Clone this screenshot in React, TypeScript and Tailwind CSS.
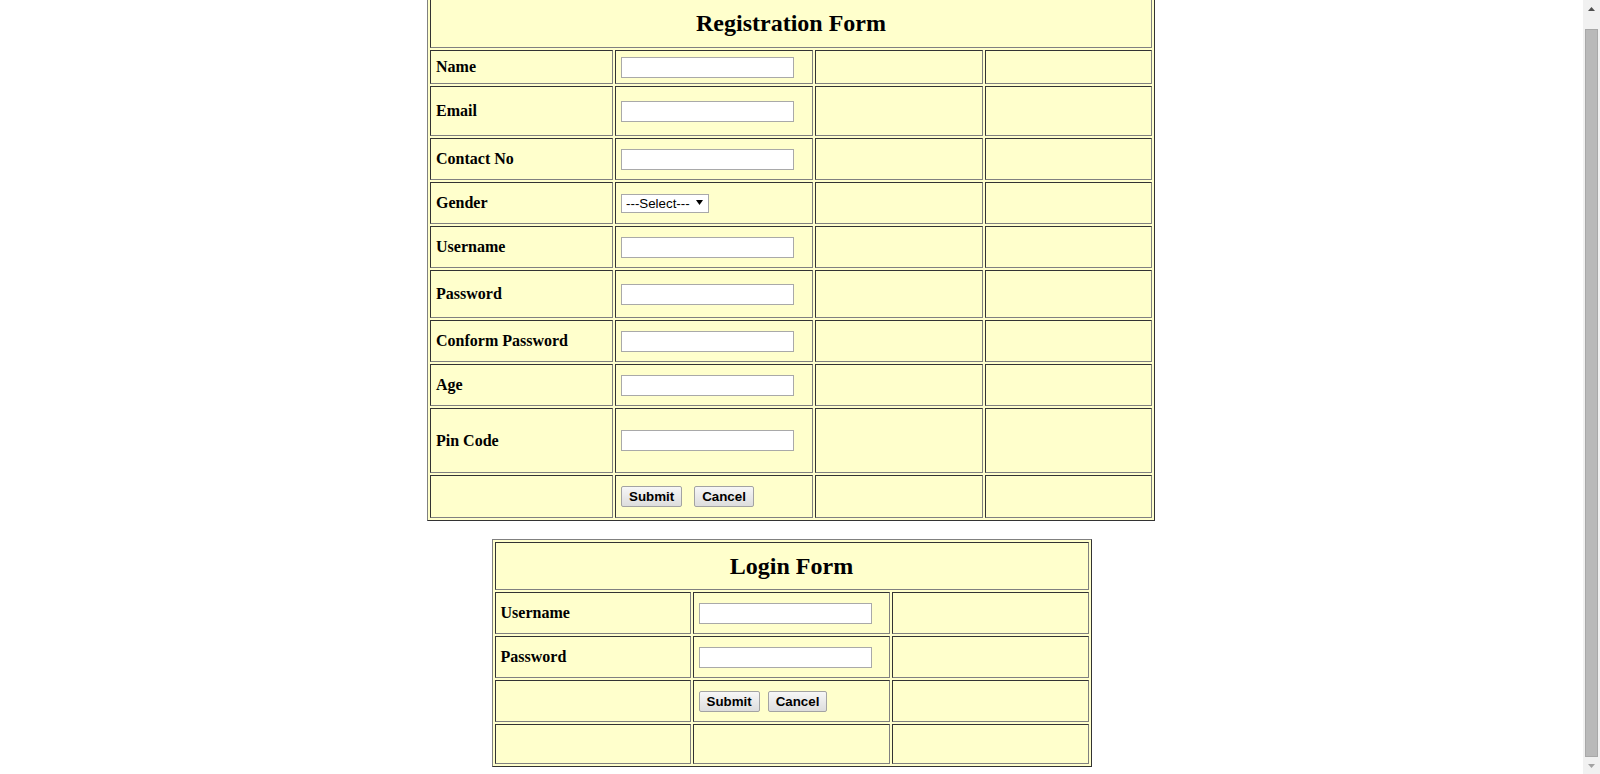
import React from 'react';

type Field = {
  label: string;
  kind: 'text' | 'select' | 'buttons' | 'empty';
};

// registration rows, in order (heights are set on the grid below)
const regFields: Field[] = [
  { label: 'Name', kind: 'text' },
  { label: 'Email', kind: 'text' },
  { label: 'Contact No', kind: 'text' },
  { label: 'Gender', kind: 'select' },
  { label: 'Username', kind: 'text' },
  { label: 'Password', kind: 'text' },
  { label: 'Conform Password', kind: 'text' },
  { label: 'Age', kind: 'text' },
  { label: 'Pin Code', kind: 'text' },
  { label: '', kind: 'buttons' },
];

const loginFields: Field[] = [
  { label: 'Username', kind: 'text' },
  { label: 'Password', kind: 'text' },
  { label: '', kind: 'buttons' },
  { label: '', kind: 'empty' },
];

const cellCls =
  'flex items-center px-[5px] bg-[#ffffcc] border border-t-[#333333] border-l-[#333333] border-b-[#808080] border-r-[#808080]';

const Cell: React.FC<{ children?: React.ReactNode; className?: string }> = ({ children, className }) => (
  <div className={`${cellCls} ${className ?? ''}`}>{children}</div>
);

const TextInput: React.FC = () => (
  <input
    type="text"
    className="w-[173px] h-[21px] border border-[#a9a9a9] bg-white px-[2px] text-[13px] font-['Liberation_Sans',Arial,sans-serif] outline-none"
  />
);

const Btn: React.FC<{ label: string }> = ({ label }) => (
  <button
    type="button"
    className="h-[21px] px-[7px] border border-[#a3a3a3] rounded-[2px] bg-linear-to-b from-[#f7f7f7] to-[#dddddd] text-[13.33px] leading-[15px] font-bold text-black font-['Liberation_Sans',Arial,sans-serif]"
  >
    {label}
  </button>
);

const GenderSelect: React.FC = () => (
  <div className="relative h-[19px]">
    <select
      defaultValue=""
      className="block appearance-none w-[88px] h-[19px] border border-[#a9a9a9] bg-white pl-[4px] text-[13.33px] leading-[15px] text-black font-['Liberation_Sans',Arial,sans-serif] outline-none"
    >
      <option value="">---Select---</option>
      <option value="m">Male</option>
      <option value="f">Female</option>
    </select>
    <svg className="absolute left-[75px] top-[6px] pointer-events-none" width="7" height="5" viewBox="0 0 7 5">
      <polygon points="0,0 7,0 3.5,5" fill="#000" />
    </svg>
  </div>
);

const FormTable: React.FC<{
  title: string;
  fields: Field[];
  cols: string;
  rows: string;
  extraCols: number;
  btnGap: string;
  className?: string;
}> = ({ title, fields, cols, rows, extraCols, btnGap, className }) => (
  <div
    className={`grid ${cols} ${rows} gap-[2px] p-[2px] bg-[#ffffcc] border border-t-[#808080] border-l-[#808080] border-b-[#333333] border-r-[#333333] ${className ?? ''}`}
  >
    <Cell className={extraCols === 2 ? 'col-span-4 justify-center' : 'col-span-3 justify-center'}>
      <h2 className="text-[24px] font-bold leading-[27px] text-black">{title}</h2>
    </Cell>
    {fields.map((f, i) => (
      <React.Fragment key={i}>
        <Cell>
          <span className="text-[16px] font-bold text-black">{f.label}</span>
        </Cell>
        <Cell>
          {f.kind === 'text' && <TextInput />}
          {f.kind === 'select' && <GenderSelect />}
          {f.kind === 'buttons' && (
            <div className={`flex ${btnGap}`}>
              <Btn label="Submit" />
              <Btn label="Cancel" />
            </div>
          )}
        </Cell>
        {Array.from({ length: extraCols }).map((_, j) => (
          <Cell key={j} />
        ))}
      </React.Fragment>
    ))}
  </div>
);

const Scrollbar: React.FC = () => (
  <div className="w-[17px] shrink-0 h-full bg-[#f1f1f1] flex flex-col">
    <div className="h-[17px] flex items-center justify-center">
      <svg width="7" height="4" viewBox="0 0 7 4">
        <polygon points="0,4 7,4 3.5,0" fill="#505050" />
      </svg>
    </div>
    <div className="flex-1 mt-[12px] mx-[2px] bg-[#b9b9b9] border border-[#a8a8a8]" />
    <div className="h-[17px] flex items-center justify-center">
      <svg width="7" height="4" viewBox="0 0 7 4">
        <polygon points="0,0 7,0 3.5,4" fill="#a3a3a3" />
      </svg>
    </div>
  </div>
);

const App: React.FC = () => {
  return (
    <div className="flex h-[774px] w-full overflow-hidden bg-white font-['Liberation_Serif','Times_New_Roman',serif]">
      <div className="flex-1 flex flex-col items-center">
        <FormTable
          title="Registration Form"
          fields={regFields}
          cols="grid-cols-[183px_198px_168px_167px]"
          rows="grid-rows-[50px_34px_50px_42px_42px_42px_48px_42px_42px_65px_43px]"
          extraCols={2}
          btnGap="gap-[12px]"
          className="-mt-[5px] mr-[1px] w-[728px]"
        />
        <FormTable
          title="Login Form"
          fields={loginFields}
          cols="grid-cols-[196px_197px_197px]"
          rows="grid-rows-[48px_42px_42px_42px_40px]"
          extraCols={1}
          btnGap="gap-[8px]"
          className="mt-[18px] w-[600px]"
        />
      </div>
      <Scrollbar />
    </div>
  );
};

export default App;
